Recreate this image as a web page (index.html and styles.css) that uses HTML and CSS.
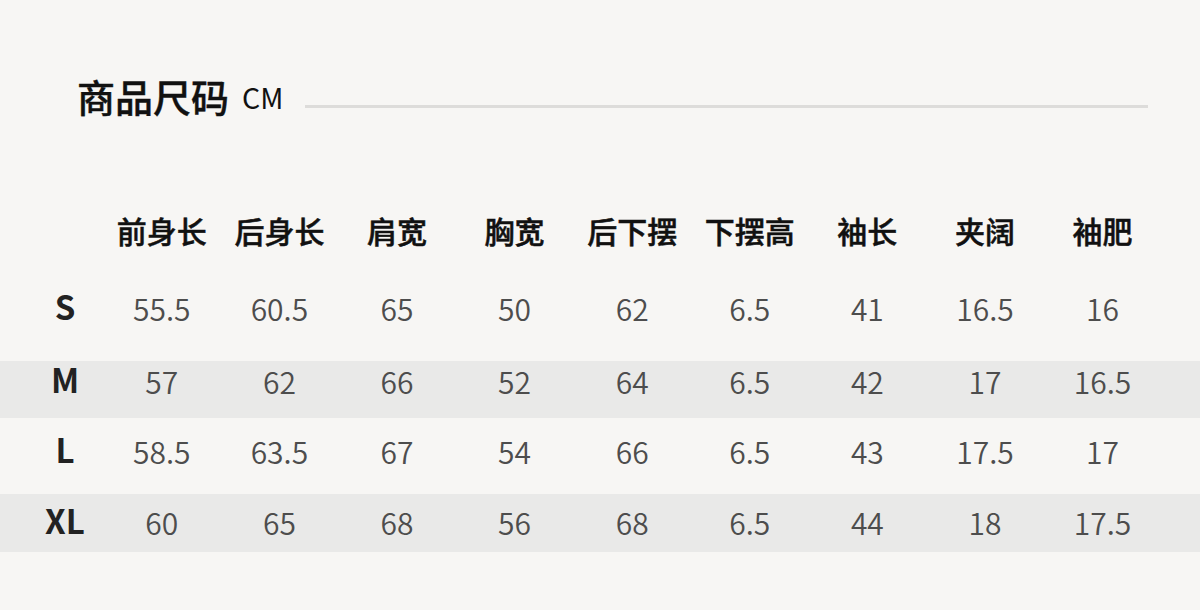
FILE: index.html
```html
<!DOCTYPE html>
<html lang="zh-CN">
<head>
<meta charset="utf-8">
<title>商品尺码</title>
<link rel="stylesheet" href="styles.css">
</head>
<body>
<div class="page">
  <div class="title-row">
    <span class="title">商品尺码</span>
    <span class="unit">CM</span>
    <span class="rule"></span>
  </div>
  <div class="table">
    <div class="row head">
      <span></span><span>前身长</span><span>后身长</span><span>肩宽</span><span>胸宽</span><span>后下摆</span><span>下摆高</span><span>袖长</span><span>夹阔</span><span>袖肥</span>
    </div>
    <div class="row data r-s">
      <span class="size">S</span><span>55.5</span><span>60.5</span><span>65</span><span>50</span><span>62</span><span>6.5</span><span>41</span><span>16.5</span><span>16</span>
    </div>
    <div class="row data r-m stripe">
      <span class="size">M</span><span>57</span><span>62</span><span>66</span><span>52</span><span>64</span><span>6.5</span><span>42</span><span>17</span><span>16.5</span>
    </div>
    <div class="row data r-l">
      <span class="size">L</span><span>58.5</span><span>63.5</span><span>67</span><span>54</span><span>66</span><span>6.5</span><span>43</span><span>17.5</span><span>17</span>
    </div>
    <div class="row data r-xl stripe">
      <span class="size">XL</span><span>60</span><span>65</span><span>68</span><span>56</span><span>68</span><span>6.5</span><span>44</span><span>18</span><span>17.5</span>
    </div>
  </div>
</div>
</body>
</html>
```

FILE: styles.css
```css
html, body {
  margin: 0;
  padding: 0;
  background: #f7f6f4;
}

body {
  font-family: "Noto Sans CJK SC", "Noto Sans", sans-serif;
  width: 1200px;
  height: 610px;
  overflow: hidden;
}

.title-row {
  display: flex;
  align-items: flex-end;
  padding: 76px 52px 0 77px;
  height: 40px;
}

.title {
  font-size: 38px;
  font-weight: 500;
  -webkit-text-stroke: 0.4px #111;
  color: #111;
  line-height: 40px;
}

.unit {
  font-size: 28.5px;
  font-weight: 400;
  color: #111;
  line-height: 40px;
  margin-left: 13px;
  position: relative;
  top: 1px;
}

.rule {
  flex: 1;
  height: 3px;
  background: #dddcda;
  margin-left: 22px;
  margin-bottom: 8px;
}

.table {
  margin-top: 94px;
}

.row {
  display: grid;
  grid-template-columns: 76px repeat(9, 117.6px);
  padding-left: 27px;
  line-height: 40px;
  text-align: center;
}

.head {
  font-size: 30px;
  font-weight: 500;
  -webkit-text-stroke: 0.5px #111;
  color: #111;
  height: 40px;
}

.data {
  font-size: 30px;
  font-weight: 350;
  color: #4d4d4d;
}

.size {
  font-size: 33px;
  font-weight: 700;
  color: #222;
  position: relative;
  top: -2px;
}

.stripe {
  background: #e9e9e8;
}

.r-s { padding-top: 38px; padding-bottom: 33px; }
.r-m { padding-top: 0; padding-bottom: 17px; }
.r-l { padding-top: 13px; padding-bottom: 23px; }
.r-xl { padding-top: 8px; padding-bottom: 10px; }
```
